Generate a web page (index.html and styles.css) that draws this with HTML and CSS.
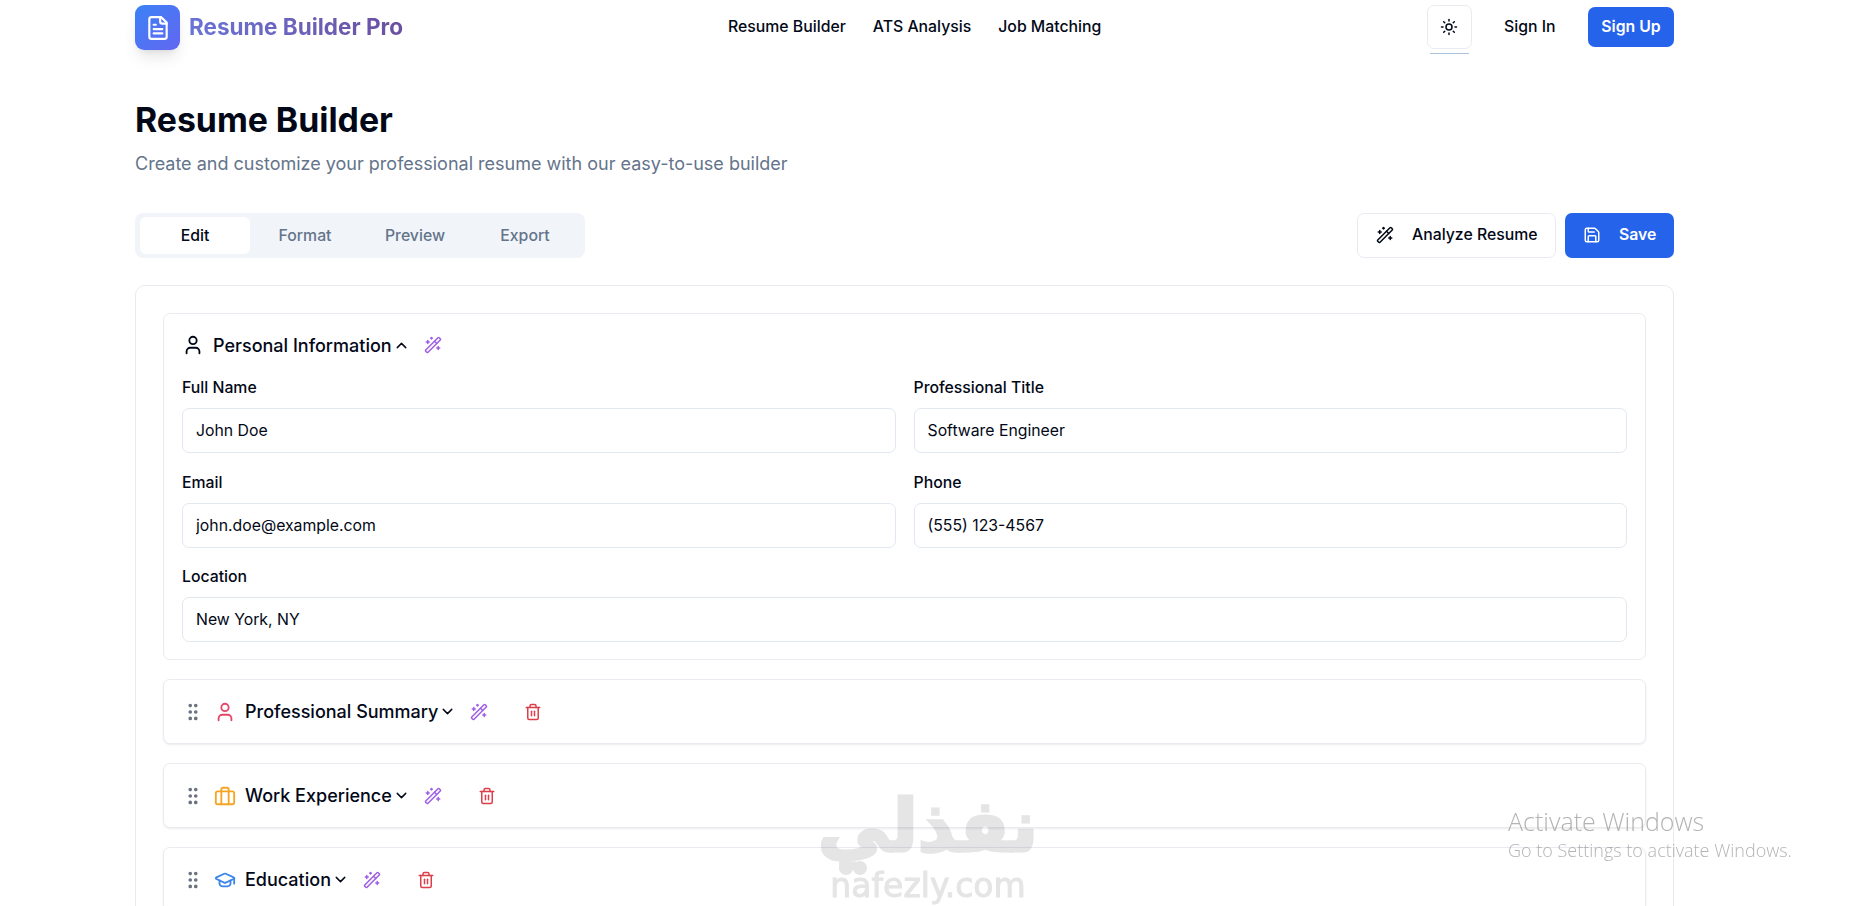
FILE: index.html
```html
<!DOCTYPE html>
<html lang="en">
<head>
<meta charset="utf-8">
<title>Resume Builder Pro</title>
<link rel="stylesheet" href="styles.css">
</head>
<body>
<svg class="sprite" xmlns="http://www.w3.org/2000/svg">
  <symbol id="i-file" viewBox="0 0 24 24"><path d="M15 2H6a2 2 0 0 0-2 2v16a2 2 0 0 0 2 2h12a2 2 0 0 0 2-2V7Z"/><path d="M14 2v4a2 2 0 0 0 2 2h4"/><path d="M10 9H8"/><path d="M16 13H8"/><path d="M16 17H8"/></symbol>
  <symbol id="i-sun" viewBox="0 0 24 24"><circle cx="12" cy="12" r="4"/><path d="M12 2v2"/><path d="M12 20v2"/><path d="m4.93 4.93 1.41 1.41"/><path d="m17.66 17.66 1.41 1.41"/><path d="M2 12h2"/><path d="M20 12h2"/><path d="m6.34 17.66-1.41 1.41"/><path d="m19.07 4.93-1.41 1.41"/></symbol>
  <symbol id="i-wand" viewBox="0 0 24 24"><path d="m21.64 3.64-1.28-1.28a1.21 1.21 0 0 0-1.72 0L2.36 18.64a1.21 1.21 0 0 0 0 1.72l1.28 1.28a1.2 1.2 0 0 0 1.72 0L21.64 5.36a1.2 1.2 0 0 0 0-1.72"/><path d="m14 7 3 3"/><path d="M5 6v4"/><path d="M19 14v4"/><path d="M10 2v2"/><path d="M7 8H3"/><path d="M21 16h-4"/><path d="M11 3H9"/></symbol>
  <symbol id="i-save" viewBox="0 0 24 24"><path d="M15.2 3a2 2 0 0 1 1.4.6l3.8 3.8a2 2 0 0 1 .6 1.4V19a2 2 0 0 1-2 2H5a2 2 0 0 1-2-2V5a2 2 0 0 1 2-2z"/><path d="M17 21v-7a1 1 0 0 0-1-1H8a1 1 0 0 0-1 1v7"/><path d="M7 3v4a1 1 0 0 0 1 1h7"/></symbol>
  <symbol id="i-user" viewBox="0 0 24 24"><path d="M19 21v-2a4 4 0 0 0-4-4H9a4 4 0 0 0-4 4v2"/><circle cx="12" cy="7" r="4"/></symbol>
  <symbol id="i-up" viewBox="0 0 24 24"><path d="m18 15-6-6-6 6"/></symbol>
  <symbol id="i-down" viewBox="0 0 24 24"><path d="m6 9 6 6 6-6"/></symbol>
  <symbol id="i-grip" viewBox="0 0 24 24"><circle cx="9" cy="12" r="1"/><circle cx="9" cy="5" r="1"/><circle cx="9" cy="19" r="1"/><circle cx="15" cy="12" r="1"/><circle cx="15" cy="5" r="1"/><circle cx="15" cy="19" r="1"/></symbol>
  <symbol id="i-trash" viewBox="0 0 24 24"><path d="M3 6h18"/><path d="M19 6v14c0 1-1 2-2 2H7c-1 0-2-1-2-2V6"/><path d="M8 6V4c0-1 1-2 2-2h4c1 0 2 1 2 2v2"/><line x1="10" x2="10" y1="11" y2="17"/><line x1="14" x2="14" y1="11" y2="17"/></symbol>
  <symbol id="i-brief" viewBox="0 0 24 24"><rect width="20" height="14" x="2" y="7" rx="2" ry="2"/><path d="M16 21V5a2 2 0 0 0-2-2h-4a2 2 0 0 0-2 2v16"/></symbol>
  <symbol id="i-cap" viewBox="0 0 24 24"><path d="M21.42 10.922a1 1 0 0 0-.019-1.838L12.83 5.18a2 2 0 0 0-1.66 0L2.6 9.08a1 1 0 0 0 0 1.832l8.57 3.908a2 2 0 0 0 1.66 0z"/><path d="M22 10v6"/><path d="M6 12.5V16a6 3 0 0 0 12 0v-3.5"/></symbol>
</svg>

<div class="page">
  <header class="topbar">
    <a class="brand">
      <span class="brand-mark"><svg class="ic ic-logo"><use href="#i-file"/></svg></span>
      <span class="brand-name">Resume Builder Pro</span>
    </a>
    <nav class="nav">
      <a>Resume Builder</a>
      <a>ATS Analysis</a>
      <a>Job Matching</a>
    </nav>
    <div class="top-actions">
      <button class="theme-btn"><svg class="ic ic-sun"><use href="#i-sun"/></svg></button>
      <a class="sign-in">Sign In</a>
      <button class="sign-up">Sign Up</button>
    </div>
  </header>

  <main>
    <h1 class="title">Resume Builder</h1>
    <p class="subtitle">Create and customize your professional resume with our easy-to-use builder</p>

    <div class="toolbar">
      <div class="tabs">
        <span class="tab active">Edit</span>
        <span class="tab">Format</span>
        <span class="tab">Preview</span>
        <span class="tab">Export</span>
      </div>
      <div class="tool-actions">
        <button class="btn btn-outline"><svg class="ic ic-btn"><use href="#i-wand"/></svg>Analyze Resume</button>
        <button class="btn btn-primary"><svg class="ic ic-btn"><use href="#i-save"/></svg>Save</button>
      </div>
    </div>

    <section class="card">
      <div class="panel panel-open">
        <div class="panel-head">
          <svg class="ic ic-section"><use href="#i-user"/></svg>
          <span class="panel-title">Personal Information</span>
          <svg class="ic ic-chev"><use href="#i-up"/></svg>
          <svg class="ic ic-wand"><use href="#i-wand"/></svg>
        </div>
        <div class="fields">
          <label class="field"><span>Full Name</span><input value="John Doe"></label>
          <label class="field"><span>Professional Title</span><input value="Software Engineer"></label>
          <label class="field"><span>Email</span><input value="john.doe@example.com"></label>
          <label class="field"><span>Phone</span><input value="(555) 123-4567"></label>
          <label class="field field-wide"><span>Location</span><input value="New York, NY"></label>
        </div>
      </div>

      <div class="panel row">
        <svg class="ic ic-grip"><use href="#i-grip"/></svg>
        <svg class="ic ic-section c-rose"><use href="#i-user"/></svg>
        <span class="panel-title">Professional Summary</span>
        <svg class="ic ic-chev"><use href="#i-down"/></svg>
        <svg class="ic ic-wand"><use href="#i-wand"/></svg>
        <svg class="ic ic-trash"><use href="#i-trash"/></svg>
      </div>
      <div class="panel row">
        <svg class="ic ic-grip"><use href="#i-grip"/></svg>
        <svg class="ic ic-section c-amber"><use href="#i-brief"/></svg>
        <span class="panel-title">Work Experience</span>
        <svg class="ic ic-chev"><use href="#i-down"/></svg>
        <svg class="ic ic-wand"><use href="#i-wand"/></svg>
        <svg class="ic ic-trash"><use href="#i-trash"/></svg>
      </div>
      <div class="panel row">
        <svg class="ic ic-grip"><use href="#i-grip"/></svg>
        <svg class="ic ic-section c-blue"><use href="#i-cap"/></svg>
        <span class="panel-title">Education</span>
        <svg class="ic ic-chev"><use href="#i-down"/></svg>
        <svg class="ic ic-wand"><use href="#i-wand"/></svg>
        <svg class="ic ic-trash"><use href="#i-trash"/></svg>
      </div>
    </section>
  </main>
</div>

<div class="watermark" dir="rtl"><span class="wm-ar">نفذلي</span><span class="wm-en" dir="ltr">nafezly.com</span></div>
<div class="activate"><strong>Activate Windows</strong><span>Go to Settings to activate Windows.</span></div>
</body>
</html>
```
FILE: styles.css
```css
* { box-sizing: border-box; }
html, body { height: 100%; overflow: hidden; }
body {
  margin: 0;
  background: #fff;
  color: #020817;
  font-family: Inter, "Liberation Sans", sans-serif;
}
.sprite { display: none; }
.ic {
  flex: none;
  fill: none;
  stroke: currentColor;
  stroke-width: 2;
  stroke-linecap: round;
  stroke-linejoin: round;
}
.page { width: 1539px; margin-left: 135px; }

/* top bar */
.topbar { display: flex; align-items: flex-start; height: 70px; padding-top: 5px; }
.brand { display: flex; align-items: center; gap: 9px; width: 593px; height: 45px; }
.brand-mark {
  width: 45px; height: 45px;
  display: flex; align-items: center; justify-content: center;
  border-radius: 9px;
  color: #fff;
  background: linear-gradient(135deg, #3b82f6, #6366f1);
  box-shadow: 0 10px 15px -3px rgba(0,0,0,.1), 0 4px 6px -4px rgba(0,0,0,.1);
}
.ic-logo { width: 26px; height: 26px; }
.brand-name {
  font-size: 22.5px; font-weight: 700;
  padding-bottom: 2px;
  background: linear-gradient(90deg, #6a74d6, #6b4fa0);
  -webkit-background-clip: text; background-clip: text;
  color: transparent;
}
.nav { display: flex; gap: 27px; height: 45px; align-items: center; padding-bottom: 3px; }
.nav a { font-size: 15.8px; font-weight: 500; color: #020817; }
.top-actions { margin-left: auto; display: flex; align-items: flex-start; }
.theme-btn {
  position: relative;
  width: 45px; height: 44px;
  display: flex; align-items: center; justify-content: center;
  padding: 0 1px 0 0;
  border: 1px solid #e8ecf1; border-radius: 7px;
  background: #fff; color: #020817;
}
.theme-btn::after {
  content: ""; position: absolute;
  left: 2px; right: 2px; bottom: -6px; height: 1px;
  background: #a9c4dc;
}
.ic-sun { width: 18px; height: 18px; }
.sign-in { margin-left: 32px; width: 84px; height: 44px; line-height: 43px; font-size: 15.8px; font-weight: 500; }
.sign-up {
  margin-top: 2px;
  width: 86px; height: 40px;
  border: 0; border-radius: 7px;
  padding: 0 0 2px;
  background: #2563eb; color: #fff;
  font: 600 15.8px Inter, sans-serif;
}

/* heading */
.title { margin: 28px 0 0; font-size: 33.8px; line-height: 44px; font-weight: 700; color: #020817; }
.subtitle { margin: 10px 0 0; font-size: 18px; line-height: 24px; color: #64748b; }

/* toolbar */
.toolbar { display: flex; justify-content: space-between; margin-top: 37px; }
.tabs { display: flex; width: 450px; height: 45px; padding: 4px 5px; background: #f1f5f9; border-radius: 8px; }
.tab {
  width: 110px;
  display: flex; align-items: center; justify-content: center;
  padding-bottom: 1px;
  font-size: 15.8px; font-weight: 500; color: #64748b;
  border-radius: 6px;
}
.tab.active { background: #fff; color: #020817; }
.tool-actions { display: flex; gap: 9px; }
.btn {
  height: 45px; padding: 0 0 2px 18px;
  display: flex; align-items: center; gap: 18px;
  white-space: nowrap;
  border-radius: 7px;
  font: 500 15.8px Inter, sans-serif;
}
.btn-outline { width: 199px; border: 1px solid #e8ecf1; background: #fff; color: #020817; }
.btn-primary { width: 109px; border: 0; background: #2563eb; color: #fff; font-weight: 600; }
.ic-btn { width: 18px; height: 18px; }

/* card */
.card {
  margin-top: 27px;
  height: 900px;
  padding: 27px;
  border: 1px solid #e8ecf1;
  border-radius: 10px;
  display: flex; flex-direction: column; gap: 19px;
  background: #fff;
}
.panel { border: 1px solid #e8ecf1; border-radius: 7px; background: #fff; }
.panel-open { flex: none; height: 347px; padding: 0 18px; }
.panel-head { display: flex; align-items: center; height: 64px; padding-bottom: 2px; }
.panel-title { font-size: 18px; font-weight: 500; color: #020817; margin-left: 9px; }
.ic-section { width: 22px; height: 22px; }
.ic-chev { width: 17px; height: 17px; margin-left: 1px; }
.ic-wand { width: 18px; height: 18px; color: #9f5fe3; margin-left: 14px; }
.ic-trash { width: 18px; height: 18px; color: #dc3f4a; margin-left: 36px; }
.ic-grip { width: 22px; height: 22px; margin-right: 10px; color: #6b7280; fill: #6b7280; }
.c-rose { color: #e5476a; }
.c-amber { color: #f5a524; }
.c-blue { color: #3b86e8; }

.row {
  flex: none;
  height: 65px;
  display: flex; align-items: center;
  padding-left: 18px;
  box-shadow: 0 1px 2px rgba(0,0,0,.08);
}
.row .panel-title { margin-left: 9px; }

.fields { display: grid; grid-template-columns: 1fr 1fr; column-gap: 18px; row-gap: 19.5px; }
.field { display: flex; flex-direction: column; gap: 11px; font-size: 15.8px; font-weight: 500; }
.field span { line-height: 19px; }
.field-wide { grid-column: 1 / -1; }
.field input {
  height: 45px; padding: 0 13px;
  border: 1px solid #e2e8f0; border-radius: 7px;
  font: 400 15.8px Inter, sans-serif;
  color: #020817;
  background: #fff;
}

/* overlays on top of the page */
.watermark {
  position: fixed; left: 821px; top: 790px;
  width: 214px;
  display: flex; flex-direction: column; align-items: center;
  color: #e5e5e5;
  mix-blend-mode: multiply;
  pointer-events: none;
}
.wm-ar { font: 700 72px/72px "DejaVu Sans", sans-serif; -webkit-text-stroke: 3px #e5e5e5; }
.wm-en { position: relative; margin-top: 6px; font: 400 33px/36px "DejaVu Sans", sans-serif; -webkit-text-stroke: 1px #e5e5e5; white-space: nowrap; }
.wm-en::before {
  content: ""; position: absolute; left: 9px; top: -7px;
  width: 14px; height: 14px; border-radius: 50%;
  background: #e5e5e5;
  box-shadow: 14px 0 0 #e5e5e5;
}
.activate {
  position: fixed; left: 1508px; top: 805px;
  display: flex; flex-direction: column;
  font-family: "Open Sans", sans-serif;
  color: rgba(130,130,130,.6);
  pointer-events: none;
}
.activate strong { font-size: 25px; font-weight: 300; line-height: 32px; }
.activate span { font-size: 18px; font-weight: 300; line-height: 26px; }
```
